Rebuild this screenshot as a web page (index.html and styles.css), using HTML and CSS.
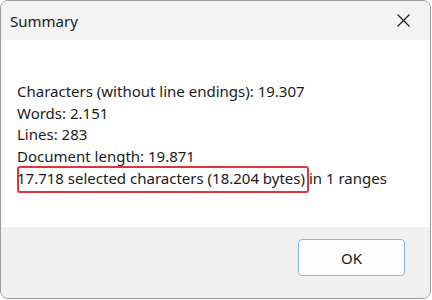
FILE: index.html
```html
<!DOCTYPE html>
<html lang="en">
<head>
    <meta charset="UTF-8">
    <title>Summary</title>
    <link rel="stylesheet" href="styles.css">
</head>
<body>
    <div class="window">
        <div class="titlebar">
            <span class="title">Summary</span>
            <button class="close" aria-label="Close">
                <svg width="13" height="13" viewBox="0 0 13 13">
                    <path d="M0.5 0.5 L12.5 12.5 M12.5 0.5 L0.5 12.5" stroke="#1a1a1a" stroke-width="1.1" fill="none"/>
                </svg>
            </button>
        </div>

        <div class="content">
            <div class="line">Characters (without line endings): 19.307</div>
            <div class="line">Words: 2.151</div>
            <div class="line">Lines: 283</div>
            <div class="line">Document length: 19.871</div>
            <div class="line"><span class="marked">17.718 selected characters (18.204 bytes)</span> in 1 ranges</div>
        </div>

        <div class="footer">
            <button class="ok">OK</button>
        </div>
    </div>
</body>
</html>
```

FILE: styles.css
```css
body {
    margin: 0;
    background: #ffffff;
    font-family: "Noto Sans", "Open Sans", sans-serif;
    color: #1a1a1a;
}
.window {
    width: 429px;
    height: 297px;
    border: 1px solid #9a9a9a;
    border-radius: 8px;
    overflow: hidden;
    display: flex;
    flex-direction: column;
    background: #ffffff;
}
.titlebar {
    height: 39px;
    background: #f3f3f3;
    display: flex;
    align-items: center;
    justify-content: space-between;
    padding: 0 0 0 9px;
}
.title {
    font-size: 15px;
}
.close {
    width: 46px;
    height: 39px;
    border: none;
    background: transparent;
    padding: 0;
    margin-right: 4px;
    display: flex;
    align-items: center;
    justify-content: center;
}
.content {
    flex: 1;
    padding: 41px 0 0 16px;
    font-size: 15px;
    line-height: 21.7px;
}
.marked {
    position: relative;
}
.marked::after {
    content: "";
    position: absolute;
    left: 0;
    right: -4px;
    top: -2px;
    bottom: -5px;
    border: 2px solid #e0353c;
    border-radius: 3px;
}
.footer {
    height: 71px;
    background: #f0f0f0;
    display: flex;
    align-items: flex-start;
    justify-content: flex-end;
    padding: 12px 25px 0 0;
    box-sizing: border-box;
}
.ok {
    width: 107px;
    height: 37px;
    background: #fdfdfd;
    border: 1px solid #86b4e3;
    border-radius: 4px;
    font-family: "Noto Sans", "Open Sans", sans-serif;
    font-size: 15px;
    color: #1a1a1a;
    padding: 0;
}
```
